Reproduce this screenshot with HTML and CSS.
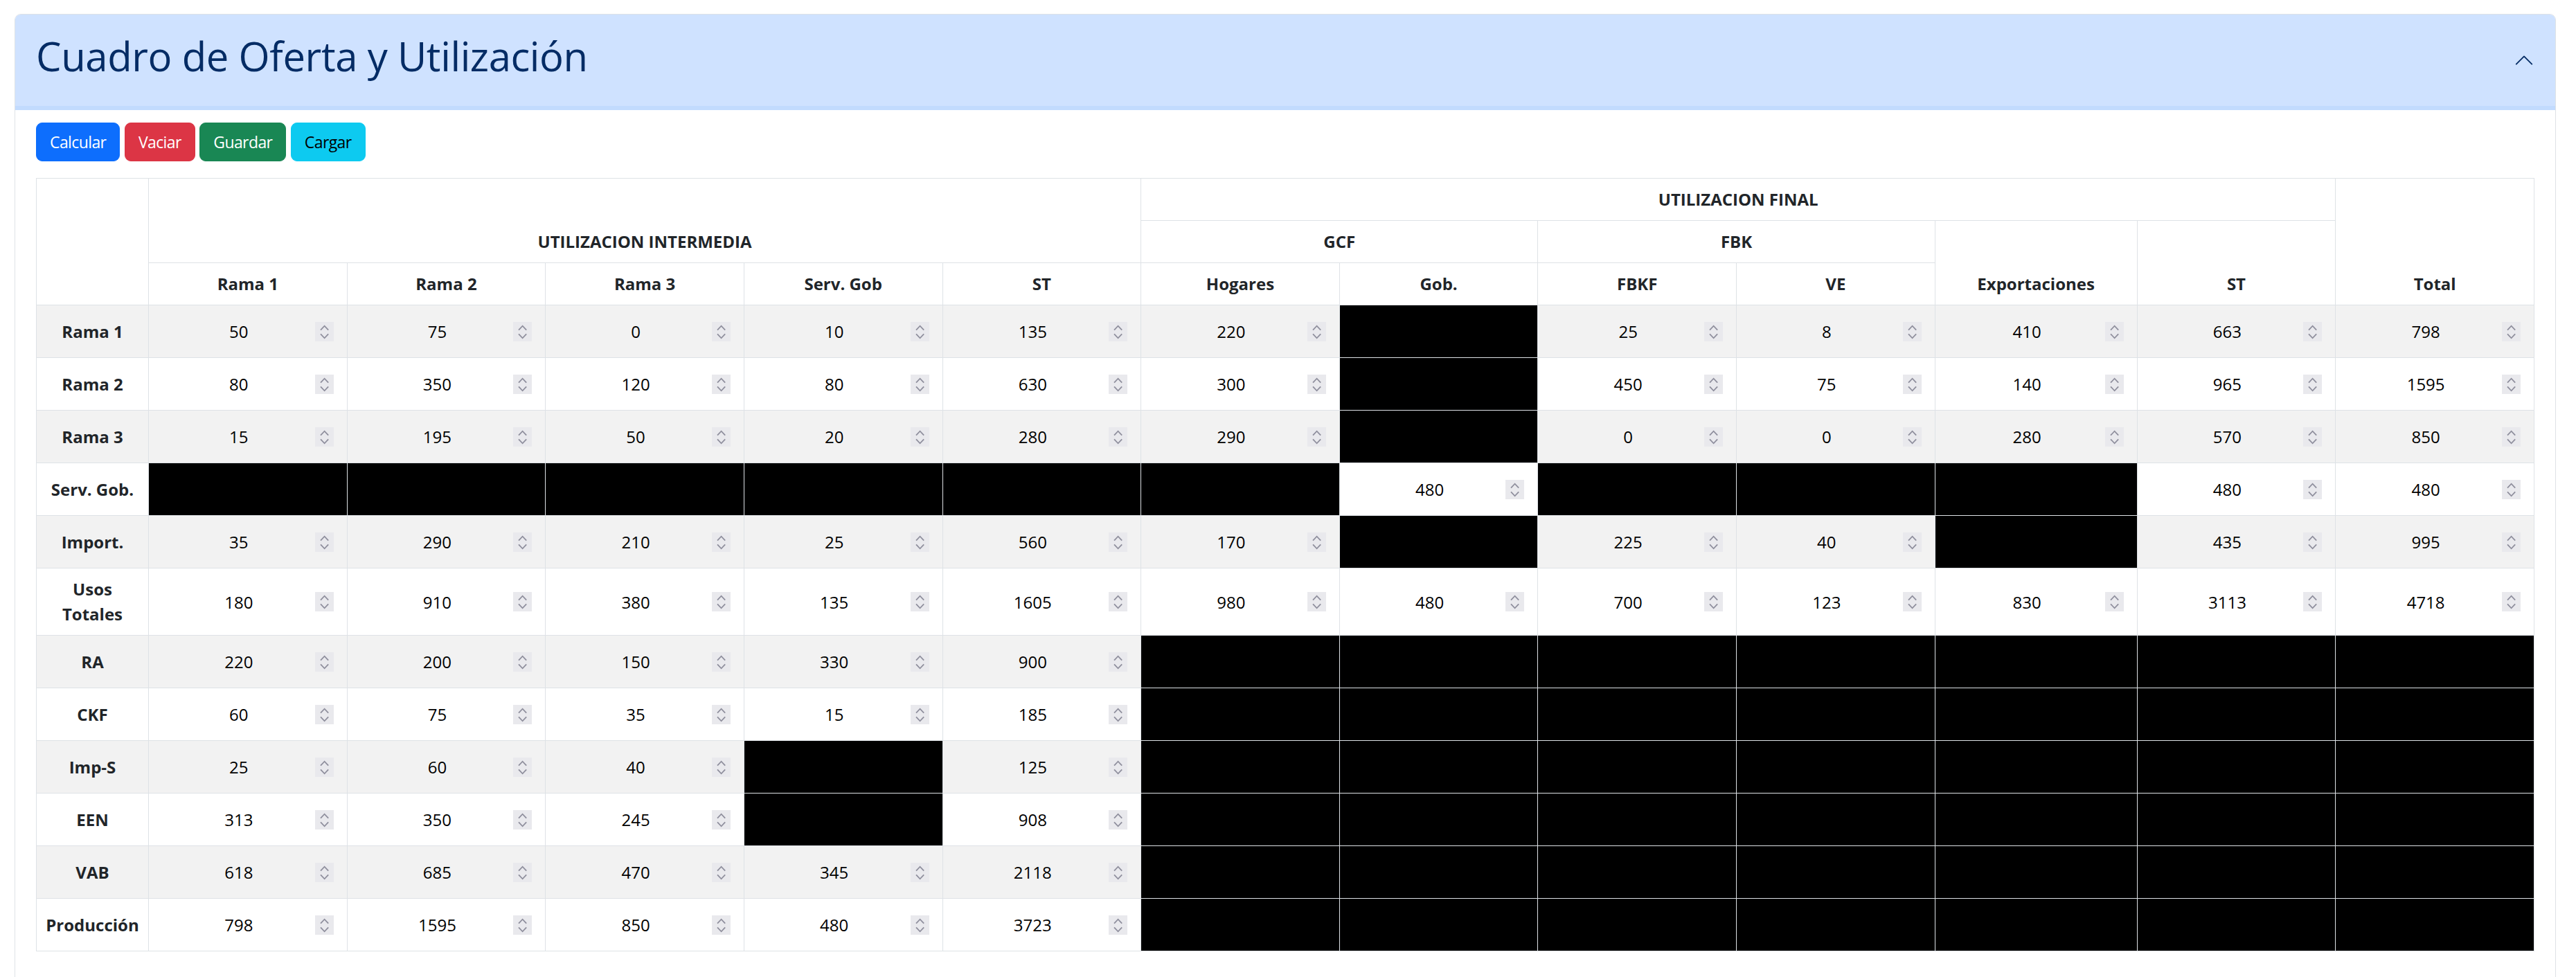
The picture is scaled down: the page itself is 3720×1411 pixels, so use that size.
FILE: index.html
```html
<!DOCTYPE html>
<html lang="es">
<head>
<meta charset="utf-8">
<title>Cuadro de Oferta y Utilización</title>
<link rel="stylesheet" href="styles.css">
</head>
<body>
<svg class="defs" width="0" height="0" aria-hidden="true">
  <symbol id="sp" viewBox="0 0 27 28">
    <rect width="27" height="28" fill="#e9e9ed"/>
    <path d="M8 11.7L13.6 5.7L19.2 11.7M8 17.3L13.6 23.3L19.2 17.3" fill="none" stroke="#8f8f9d" stroke-width="1.8"/>
  </symbol>
</svg>
<div class="page">
  <div class="accordion">
    <div class="acc-header">
      <h1 class="acc-title">Cuadro de Oferta y Utilización</h1>
      <svg class="chev" viewBox="0 0 16 16"><path d="M2 11L8 5L14 11" fill="none" stroke="#052c65" stroke-width="1" stroke-linecap="round" stroke-linejoin="round"/></svg>
    </div>
    <div class="acc-body">
      <div class="toolbar">
        <button class="btn btn-primary">Calcular</button>
        <button class="btn btn-danger">Vaciar</button>
        <button class="btn btn-success">Guardar</button>
        <button class="btn btn-info">Cargar</button>
      </div>
      <table class="cou">
        <colgroup>
          <col class="c-label">
          <col span="9">
          <col class="c-exp">
          <col span="2">
        </colgroup>
        <thead>
          <tr>
            <th rowspan="3"></th>
            <th colspan="5" rowspan="2">UTILIZACION INTERMEDIA</th>
            <th colspan="6">UTILIZACION FINAL</th>
            <th rowspan="3">Total</th>
          </tr>
          <tr>
            <th colspan="2">GCF</th>
            <th colspan="2">FBK</th>
            <th rowspan="2">Exportaciones</th>
            <th rowspan="2">ST</th>
          </tr>
          <tr>
            <th>Rama 1</th>
            <th>Rama 2</th>
            <th>Rama 3</th>
            <th>Serv. Gob</th>
            <th>ST</th>
            <th>Hogares</th>
            <th>Gob.</th>
            <th>FBKF</th>
            <th>VE</th>
          </tr>
        </thead>
        <tbody>
          <tr>
            <th>Rama 1</th>
            <td><div class="field"><input class="num" value="50" readonly><svg class="spin"><use href="#sp"/></svg></div></td>
            <td><div class="field"><input class="num" value="75" readonly><svg class="spin"><use href="#sp"/></svg></div></td>
            <td><div class="field"><input class="num" value="0" readonly><svg class="spin"><use href="#sp"/></svg></div></td>
            <td><div class="field"><input class="num" value="10" readonly><svg class="spin"><use href="#sp"/></svg></div></td>
            <td><div class="field"><input class="num" value="135" readonly><svg class="spin"><use href="#sp"/></svg></div></td>
            <td><div class="field"><input class="num" value="220" readonly><svg class="spin"><use href="#sp"/></svg></div></td>
            <td class="blk"></td>
            <td><div class="field"><input class="num" value="25" readonly><svg class="spin"><use href="#sp"/></svg></div></td>
            <td><div class="field"><input class="num" value="8" readonly><svg class="spin"><use href="#sp"/></svg></div></td>
            <td><div class="field"><input class="num" value="410" readonly><svg class="spin"><use href="#sp"/></svg></div></td>
            <td><div class="field"><input class="num" value="663" readonly><svg class="spin"><use href="#sp"/></svg></div></td>
            <td><div class="field"><input class="num" value="798" readonly><svg class="spin"><use href="#sp"/></svg></div></td>
          </tr>
          <tr>
            <th>Rama 2</th>
            <td><div class="field"><input class="num" value="80" readonly><svg class="spin"><use href="#sp"/></svg></div></td>
            <td><div class="field"><input class="num" value="350" readonly><svg class="spin"><use href="#sp"/></svg></div></td>
            <td><div class="field"><input class="num" value="120" readonly><svg class="spin"><use href="#sp"/></svg></div></td>
            <td><div class="field"><input class="num" value="80" readonly><svg class="spin"><use href="#sp"/></svg></div></td>
            <td><div class="field"><input class="num" value="630" readonly><svg class="spin"><use href="#sp"/></svg></div></td>
            <td><div class="field"><input class="num" value="300" readonly><svg class="spin"><use href="#sp"/></svg></div></td>
            <td class="blk"></td>
            <td><div class="field"><input class="num" value="450" readonly><svg class="spin"><use href="#sp"/></svg></div></td>
            <td><div class="field"><input class="num" value="75" readonly><svg class="spin"><use href="#sp"/></svg></div></td>
            <td><div class="field"><input class="num" value="140" readonly><svg class="spin"><use href="#sp"/></svg></div></td>
            <td><div class="field"><input class="num" value="965" readonly><svg class="spin"><use href="#sp"/></svg></div></td>
            <td><div class="field"><input class="num" value="1595" readonly><svg class="spin"><use href="#sp"/></svg></div></td>
          </tr>
          <tr>
            <th>Rama 3</th>
            <td><div class="field"><input class="num" value="15" readonly><svg class="spin"><use href="#sp"/></svg></div></td>
            <td><div class="field"><input class="num" value="195" readonly><svg class="spin"><use href="#sp"/></svg></div></td>
            <td><div class="field"><input class="num" value="50" readonly><svg class="spin"><use href="#sp"/></svg></div></td>
            <td><div class="field"><input class="num" value="20" readonly><svg class="spin"><use href="#sp"/></svg></div></td>
            <td><div class="field"><input class="num" value="280" readonly><svg class="spin"><use href="#sp"/></svg></div></td>
            <td><div class="field"><input class="num" value="290" readonly><svg class="spin"><use href="#sp"/></svg></div></td>
            <td class="blk"></td>
            <td><div class="field"><input class="num" value="0" readonly><svg class="spin"><use href="#sp"/></svg></div></td>
            <td><div class="field"><input class="num" value="0" readonly><svg class="spin"><use href="#sp"/></svg></div></td>
            <td><div class="field"><input class="num" value="280" readonly><svg class="spin"><use href="#sp"/></svg></div></td>
            <td><div class="field"><input class="num" value="570" readonly><svg class="spin"><use href="#sp"/></svg></div></td>
            <td><div class="field"><input class="num" value="850" readonly><svg class="spin"><use href="#sp"/></svg></div></td>
          </tr>
          <tr>
            <th>Serv. Gob.</th>
            <td class="blk"></td>
            <td class="blk"></td>
            <td class="blk"></td>
            <td class="blk"></td>
            <td class="blk"></td>
            <td class="blk"></td>
            <td><div class="field"><input class="num" value="480" readonly><svg class="spin"><use href="#sp"/></svg></div></td>
            <td class="blk"></td>
            <td class="blk"></td>
            <td class="blk"></td>
            <td><div class="field"><input class="num" value="480" readonly><svg class="spin"><use href="#sp"/></svg></div></td>
            <td><div class="field"><input class="num" value="480" readonly><svg class="spin"><use href="#sp"/></svg></div></td>
          </tr>
          <tr>
            <th>Import.</th>
            <td><div class="field"><input class="num" value="35" readonly><svg class="spin"><use href="#sp"/></svg></div></td>
            <td><div class="field"><input class="num" value="290" readonly><svg class="spin"><use href="#sp"/></svg></div></td>
            <td><div class="field"><input class="num" value="210" readonly><svg class="spin"><use href="#sp"/></svg></div></td>
            <td><div class="field"><input class="num" value="25" readonly><svg class="spin"><use href="#sp"/></svg></div></td>
            <td><div class="field"><input class="num" value="560" readonly><svg class="spin"><use href="#sp"/></svg></div></td>
            <td><div class="field"><input class="num" value="170" readonly><svg class="spin"><use href="#sp"/></svg></div></td>
            <td class="blk"></td>
            <td><div class="field"><input class="num" value="225" readonly><svg class="spin"><use href="#sp"/></svg></div></td>
            <td><div class="field"><input class="num" value="40" readonly><svg class="spin"><use href="#sp"/></svg></div></td>
            <td class="blk"></td>
            <td><div class="field"><input class="num" value="435" readonly><svg class="spin"><use href="#sp"/></svg></div></td>
            <td><div class="field"><input class="num" value="995" readonly><svg class="spin"><use href="#sp"/></svg></div></td>
          </tr>
          <tr>
            <th>Usos Totales</th>
            <td><div class="field"><input class="num" value="180" readonly><svg class="spin"><use href="#sp"/></svg></div></td>
            <td><div class="field"><input class="num" value="910" readonly><svg class="spin"><use href="#sp"/></svg></div></td>
            <td><div class="field"><input class="num" value="380" readonly><svg class="spin"><use href="#sp"/></svg></div></td>
            <td><div class="field"><input class="num" value="135" readonly><svg class="spin"><use href="#sp"/></svg></div></td>
            <td><div class="field"><input class="num" value="1605" readonly><svg class="spin"><use href="#sp"/></svg></div></td>
            <td><div class="field"><input class="num" value="980" readonly><svg class="spin"><use href="#sp"/></svg></div></td>
            <td><div class="field"><input class="num" value="480" readonly><svg class="spin"><use href="#sp"/></svg></div></td>
            <td><div class="field"><input class="num" value="700" readonly><svg class="spin"><use href="#sp"/></svg></div></td>
            <td><div class="field"><input class="num" value="123" readonly><svg class="spin"><use href="#sp"/></svg></div></td>
            <td><div class="field"><input class="num" value="830" readonly><svg class="spin"><use href="#sp"/></svg></div></td>
            <td><div class="field"><input class="num" value="3113" readonly><svg class="spin"><use href="#sp"/></svg></div></td>
            <td><div class="field"><input class="num" value="4718" readonly><svg class="spin"><use href="#sp"/></svg></div></td>
          </tr>
          <tr>
            <th>RA</th>
            <td><div class="field"><input class="num" value="220" readonly><svg class="spin"><use href="#sp"/></svg></div></td>
            <td><div class="field"><input class="num" value="200" readonly><svg class="spin"><use href="#sp"/></svg></div></td>
            <td><div class="field"><input class="num" value="150" readonly><svg class="spin"><use href="#sp"/></svg></div></td>
            <td><div class="field"><input class="num" value="330" readonly><svg class="spin"><use href="#sp"/></svg></div></td>
            <td><div class="field"><input class="num" value="900" readonly><svg class="spin"><use href="#sp"/></svg></div></td>
            <td class="blk"></td><td class="blk"></td><td class="blk"></td><td class="blk"></td><td class="blk"></td><td class="blk"></td><td class="blk"></td>
          </tr>
          <tr>
            <th>CKF</th>
            <td><div class="field"><input class="num" value="60" readonly><svg class="spin"><use href="#sp"/></svg></div></td>
            <td><div class="field"><input class="num" value="75" readonly><svg class="spin"><use href="#sp"/></svg></div></td>
            <td><div class="field"><input class="num" value="35" readonly><svg class="spin"><use href="#sp"/></svg></div></td>
            <td><div class="field"><input class="num" value="15" readonly><svg class="spin"><use href="#sp"/></svg></div></td>
            <td><div class="field"><input class="num" value="185" readonly><svg class="spin"><use href="#sp"/></svg></div></td>
            <td class="blk"></td><td class="blk"></td><td class="blk"></td><td class="blk"></td><td class="blk"></td><td class="blk"></td><td class="blk"></td>
          </tr>
          <tr>
            <th>Imp-S</th>
            <td><div class="field"><input class="num" value="25" readonly><svg class="spin"><use href="#sp"/></svg></div></td>
            <td><div class="field"><input class="num" value="60" readonly><svg class="spin"><use href="#sp"/></svg></div></td>
            <td><div class="field"><input class="num" value="40" readonly><svg class="spin"><use href="#sp"/></svg></div></td>
            <td class="blk"></td>
            <td><div class="field"><input class="num" value="125" readonly><svg class="spin"><use href="#sp"/></svg></div></td>
            <td class="blk"></td><td class="blk"></td><td class="blk"></td><td class="blk"></td><td class="blk"></td><td class="blk"></td><td class="blk"></td>
          </tr>
          <tr>
            <th>EEN</th>
            <td><div class="field"><input class="num" value="313" readonly><svg class="spin"><use href="#sp"/></svg></div></td>
            <td><div class="field"><input class="num" value="350" readonly><svg class="spin"><use href="#sp"/></svg></div></td>
            <td><div class="field"><input class="num" value="245" readonly><svg class="spin"><use href="#sp"/></svg></div></td>
            <td class="blk"></td>
            <td><div class="field"><input class="num" value="908" readonly><svg class="spin"><use href="#sp"/></svg></div></td>
            <td class="blk"></td><td class="blk"></td><td class="blk"></td><td class="blk"></td><td class="blk"></td><td class="blk"></td><td class="blk"></td>
          </tr>
          <tr>
            <th>VAB</th>
            <td><div class="field"><input class="num" value="618" readonly><svg class="spin"><use href="#sp"/></svg></div></td>
            <td><div class="field"><input class="num" value="685" readonly><svg class="spin"><use href="#sp"/></svg></div></td>
            <td><div class="field"><input class="num" value="470" readonly><svg class="spin"><use href="#sp"/></svg></div></td>
            <td><div class="field"><input class="num" value="345" readonly><svg class="spin"><use href="#sp"/></svg></div></td>
            <td><div class="field"><input class="num" value="2118" readonly><svg class="spin"><use href="#sp"/></svg></div></td>
            <td class="blk"></td><td class="blk"></td><td class="blk"></td><td class="blk"></td><td class="blk"></td><td class="blk"></td><td class="blk"></td>
          </tr>
          <tr>
            <th>Producción</th>
            <td><div class="field"><input class="num" value="798" readonly><svg class="spin"><use href="#sp"/></svg></div></td>
            <td><div class="field"><input class="num" value="1595" readonly><svg class="spin"><use href="#sp"/></svg></div></td>
            <td><div class="field"><input class="num" value="850" readonly><svg class="spin"><use href="#sp"/></svg></div></td>
            <td><div class="field"><input class="num" value="480" readonly><svg class="spin"><use href="#sp"/></svg></div></td>
            <td><div class="field"><input class="num" value="3723" readonly><svg class="spin"><use href="#sp"/></svg></div></td>
            <td class="blk"></td><td class="blk"></td><td class="blk"></td><td class="blk"></td><td class="blk"></td><td class="blk"></td><td class="blk"></td>
          </tr>
        </tbody>
      </table>
    </div>
  </div>
</div>
</body>
</html>
```

FILE: styles.css
```css
* { box-sizing: border-box; }

html, body { margin: 0; padding: 0; }

body {
  font-family: "Open Sans", "Noto Sans", "Liberation Sans", sans-serif;
  font-size: 24px;
  line-height: 1.5;
  color: #212529;
  background: #ffffff;
}

.defs { display: block; width: 0; height: 0; overflow: hidden; }

.page { padding: 20px 29px 0 21px; }

.accordion {
  border: 1px solid #dee2e6;
  border-radius: 9px;
  overflow: hidden;
  background: #ffffff;
}

.acc-header {
  display: flex;
  align-items: center;
  padding: 24px 30px;
  background: #cfe2ff;
  color: #052c65;
  box-shadow: 0 6px 0 #c2dbfe;
}

.acc-title {
  flex: 1;
  margin: 0 0 12px 0;
  font-size: 58px;
  letter-spacing: -0.4px;
  font-weight: 400;
  line-height: 72px;
}

.chev { width: 30px; height: 30px; flex-shrink: 0; }

.acc-body { padding: 24px 30px; }

.toolbar { display: flex; gap: 6.5px; }

.btn {
  font-family: inherit;
  font-size: 23px;
  letter-spacing: -0.6px;
  line-height: 36px;
  padding: 9px 19px;
  border: 1px solid transparent;
  border-radius: 9px;
  color: #ffffff;
  cursor: pointer;
}
.btn-primary { background: #0d6efd; border-color: #0d6efd; }
.btn-danger  { background: #dc3545; border-color: #dc3545; }
.btn-success { background: #198754; border-color: #198754; }
.btn-info    { background: #0dcaf0; border-color: #0dcaf0; color: #000000; }

.cou {
  width: 100%;
  margin: 24px 0 24px 0;
  border-collapse: collapse;
  table-layout: fixed;
  border: 1px solid #dee2e6;
}
.c-label { width: 162px; }
.c-exp { width: 292px; }

.cou th, .cou td {
  border: 1px solid #dee2e6;
  padding: 12px;
  background: #ffffff;
}

.cou thead th {
  vertical-align: bottom;
  text-align: center;
  font-weight: 700;
}

.cou tbody th {
  vertical-align: middle;
  text-align: center;
  font-weight: 700;
}

.cou tbody td { vertical-align: middle; }

.cou tbody tr:nth-child(odd) > * { background: #f2f2f2; }
.cou tbody tr > td.blk { background: #000000; }

.field {
  display: flex;
  align-items: center;
  height: 51px;
  padding-right: 7px;
}

.num {
  flex: 1;
  width: 100%;
  min-width: 0;
  height: 51px;
  padding: 0 0 0 8px;
  border: 0;
  outline: none;
  background: transparent;
  font: inherit;
  color: #000000;
  text-align: center;
}

.spin { width: 27px; height: 28px; flex-shrink: 0; }
```
